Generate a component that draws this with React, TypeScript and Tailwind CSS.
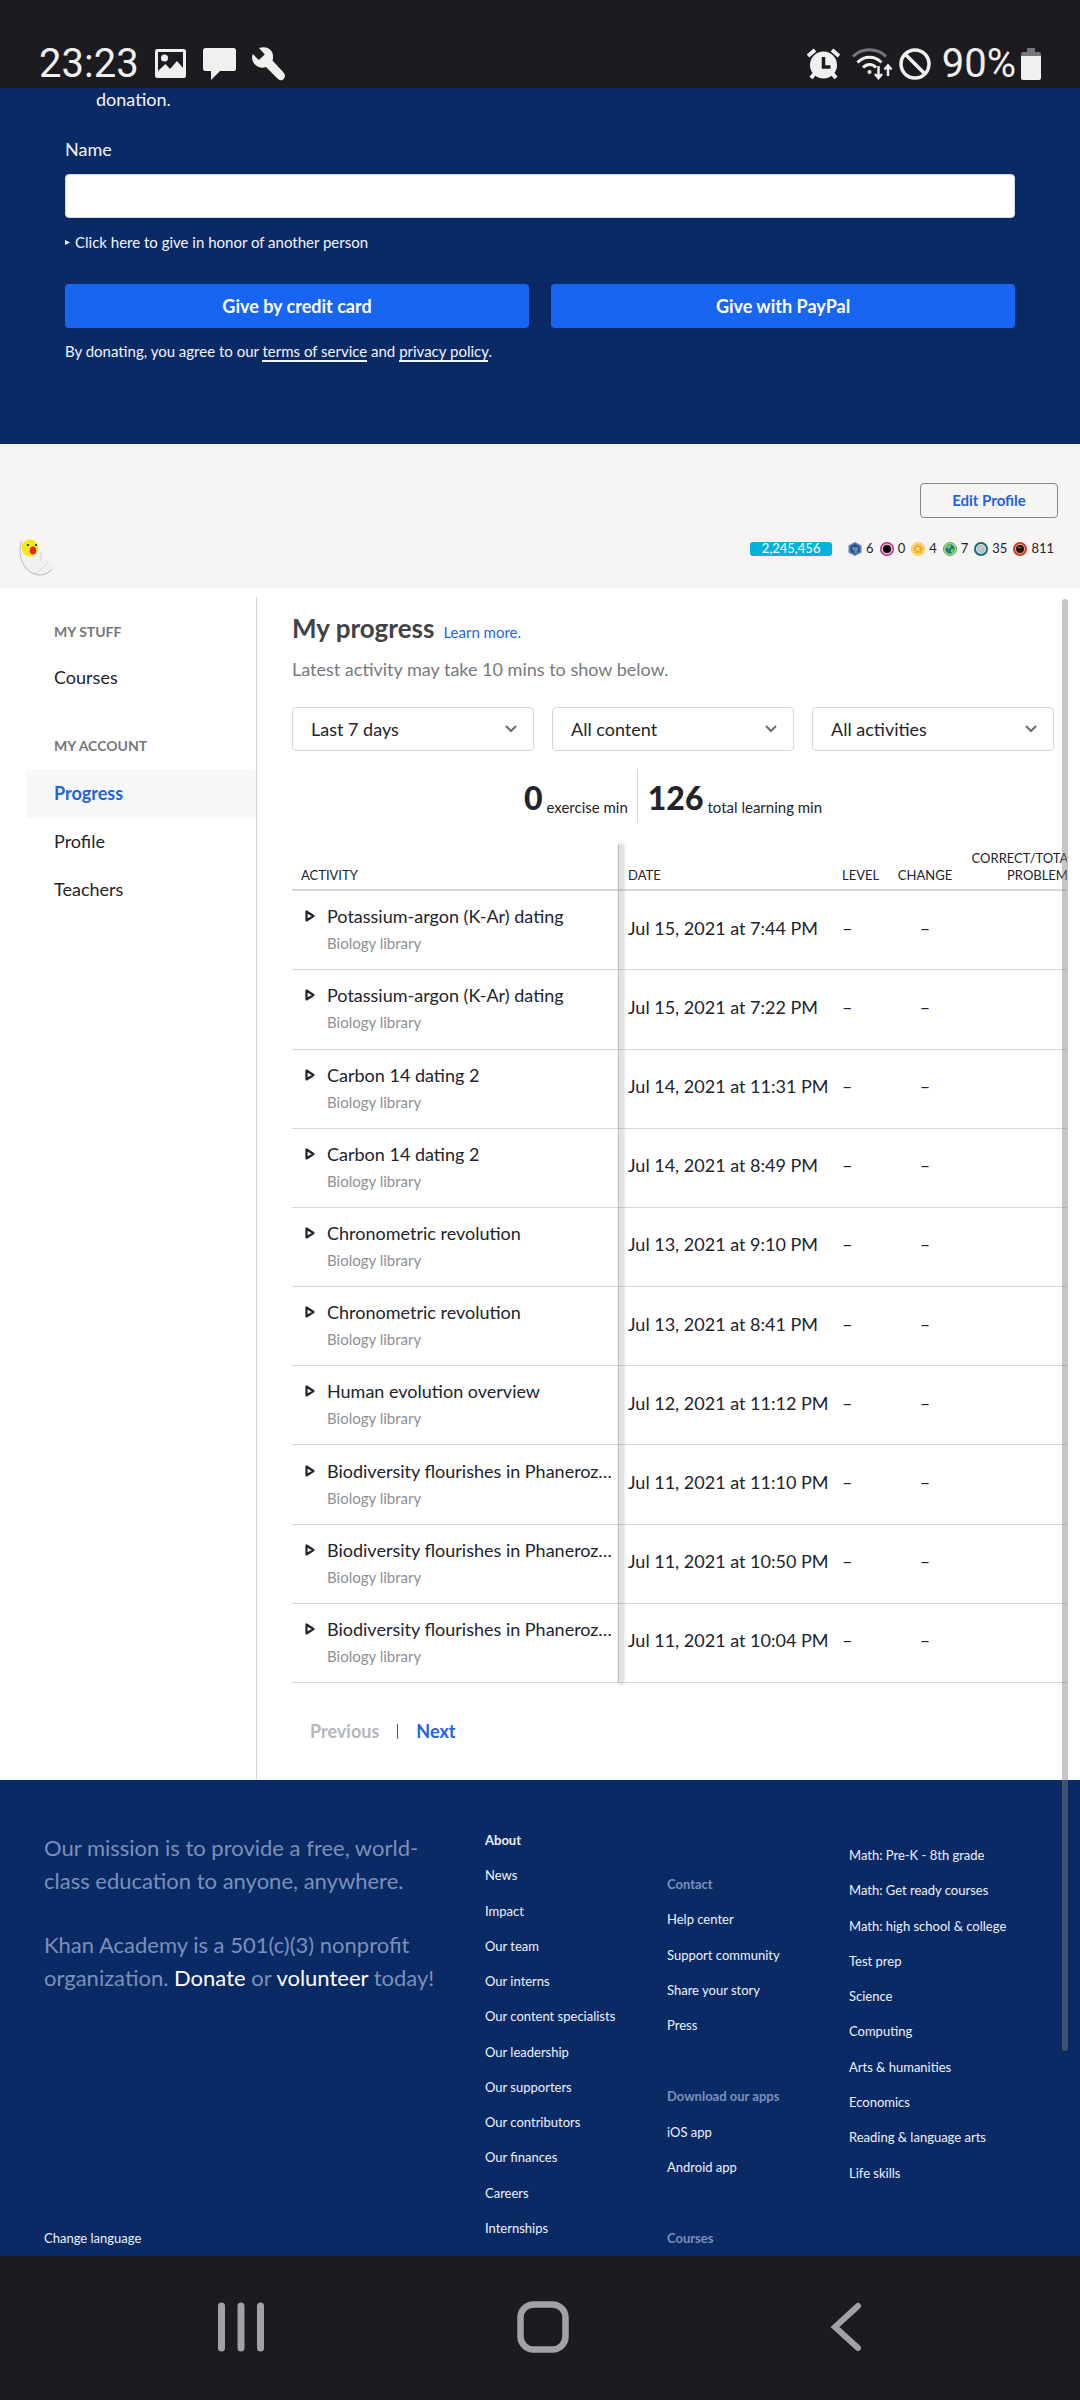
import type { ReactNode } from 'react';

const activities = [
  ['Potassium-argon (K-Ar) dating', 'Jul 15, 2021 at 7:44 PM'],
  ['Potassium-argon (K-Ar) dating', 'Jul 15, 2021 at 7:22 PM'],
  ['Carbon 14 dating 2', 'Jul 14, 2021 at 11:31 PM'],
  ['Carbon 14 dating 2', 'Jul 14, 2021 at 8:49 PM'],
  ['Chronometric revolution', 'Jul 13, 2021 at 9:10 PM'],
  ['Chronometric revolution', 'Jul 13, 2021 at 8:41 PM'],
  ['Human evolution overview', 'Jul 12, 2021 at 11:12 PM'],
  ['Biodiversity flourishes in Phanerozoic eon', 'Jul 11, 2021 at 11:10 PM'],
  ['Biodiversity flourishes in Phanerozoic eon', 'Jul 11, 2021 at 10:50 PM'],
  ['Biodiversity flourishes in Phanerozoic eon', 'Jul 11, 2021 at 10:04 PM'],
];

const aboutLinks = [
  'News', 'Impact', 'Our team', 'Our interns', 'Our content specialists', 'Our leadership',
  'Our supporters', 'Our contributors', 'Our finances', 'Careers', 'Internships',
];

const courseLinks = [
  'Math: Pre-K - 8th grade', 'Math: Get ready courses', 'Math: high school & college', 'Test prep',
  'Science', 'Computing', 'Arts & humanities', 'Economics', 'Reading & language arts', 'Life skills',
];

function StatusBar() {
  return (
    <header className="flex h-[88px] items-end justify-between bg-[#1c1b20] px-[39px] pb-1 font-[Roboto,sans-serif] text-[40px] leading-10 text-[#f0f0f0]">
      <div className="flex items-center">
        <span>23:23</span>
        <svg className="ml-4 h-[30px] w-[31px]" viewBox="0 0 31 30" fill="currentColor" aria-hidden="true">
          <path fillRule="evenodd" d="M2.500 0h26A2.500 2.500 0 0 1 31 2.500v24A2.500 2.500 0 0 1 28.500 29h-26A2.500 2.500 0 0 1 0 26.500v-24A2.500 2.500 0 0 1 2.500 0ZM3 3v19l7.500-7 4.500 5 7-8 6 7V3Z" />
          <circle cx="9.500" cy="9" r="3.500" />
        </svg>
        <svg className="ml-[17px] h-8 w-[33px]" viewBox="0 0 33 32" fill="currentColor" aria-hidden="true">
          <path d="M2.500 0h28A2.500 2.500 0 0 1 33 2.500v18a2.500 2.500 0 0 1-2.500 2.500H17l-9 9v-9H2.500A2.500 2.500 0 0 1 0 20.500v-18A2.500 2.500 0 0 1 2.500 0Z" />
        </svg>
        <svg className="ml-4 h-[34px] w-[34px]" viewBox="0 0 34 34" fill="currentColor" aria-hidden="true">
          <path d="M7 1c5-2 11-.5 13 4 1.500 3 1.300 6 .5 8.500L32 26c3 4-2 10-6 6L14 20c-4 1.500-8.500.5-11.500-3C0 14-.5 10 .8 7l6 6 6-5.500Z" />
        </svg>
      </div>
      <div className="flex items-center">
        <svg className="h-8 w-[33px]" viewBox="0 0 33 32" aria-hidden="true">
          <g stroke="#f0f0f0" strokeWidth="4">
            <path d="M1 8l7-6M32 8l-7-6M8 25l-4 5M25 25l4 5" />
          </g>
          <circle cx="16.500" cy="17" r="13.500" fill="#f0f0f0" />
          <path d="M16.500 9v10h7" fill="none" stroke="#1c1b20" strokeWidth="3.500" />
        </svg>
        <svg className="ml-3 h-8 w-[41px]" viewBox="0 0 41 32" fill="none" stroke="#f0f0f0" strokeWidth="3" aria-hidden="true">
          <path d="M1 8.500C10-.5 25-.5 34 8.500" stroke="#77767a" />
          <path d="M5.500 14.500c6.500-7 17.500-7 24 0M11 19.500c4-4 9.500-4 13 0" />
          <circle cx="17.500" cy="24" r="2" fill="#f0f0f0" stroke="none" />
          <path d="M26.500 18v11M23 26l3.500 4 3.500-4M36 28V18M32.500 21.500l3.500-4 3.500 4" strokeWidth="2.500" />
        </svg>
        <svg className="ml-[6px] h-8 w-8" viewBox="0 0 32 32" fill="none" stroke="#f0f0f0" strokeWidth="3.500" aria-hidden="true">
          <circle cx="16" cy="16" r="14" />
          <path d="M6 6l20 20" />
        </svg>
        <span className="ml-[11px]">90%</span>
        <svg className="ml-[5px] h-8 w-5" viewBox="0 0 20 32" aria-hidden="true">
          <path d="M6 0h8v4h4a2 2 0 0 1 2 2v2H0V6a2 2 0 0 1 2-2h4Z" fill="#77767a" />
          <path d="M0 8h20v22a2 2 0 0 1-2 2H2a2 2 0 0 1-2-2Z" fill="#f0f0f0" />
        </svg>
      </div>
    </header>
  );
}

function Donation() {
  return (
    <section className="bg-[#0a2a66] px-[65px] pb-[81px] text-[18px] leading-6 text-[#f2f5fb]">
      <p className="pl-[31px] leading-[22px]">donation.</p>
      <label htmlFor="name" className="mt-[27px] block">Name</label>
      <input id="name" type="text" className="mt-[13px] block h-11 w-full rounded-[4px] border border-[#d6dae6] bg-white px-3 text-[#21242c]" />
      <button type="button" className="mt-3 flex items-center gap-[5px] text-[15px]">
        <svg className="h-2 w-[5px]" viewBox="0 0 5 8" fill="currentColor" aria-hidden="true"><path d="M0 2l5 2.500L0 7Z" /></svg>
        Click here to give in honor of another person
      </button>
      <div className="mt-[30px] grid grid-cols-2 gap-[22px] font-bold text-white">
        <button type="button" className="h-11 rounded-[4px] bg-[#1865f2]">Give by credit card</button>
        <button type="button" className="h-11 rounded-[4px] bg-[#1865f2]">Give with PayPal</button>
      </div>
      <p className="mt-[11px] text-[15px]">
        By donating, you agree to our <a href="#terms" className="border-b-2 border-current">terms of service</a> and{' '}
        <a href="#privacy" className="border-b-2 border-current">privacy policy</a>.
      </p>
    </section>
  );
}

function Badge({ count, children }: { count: string; children: ReactNode }) {
  return (
    <span className="flex items-center gap-1">
      <svg className="h-[14px] w-[14px]" viewBox="0 0 14 14" aria-hidden="true">{children}</svg>
      {count}
    </span>
  );
}

function ProfileBanner() {
  return (
    <section className="flex h-36 items-end justify-between bg-[#f6f5f4] pr-[22px] pl-[19px]">
      <svg className="mb-[11px] h-[38px] w-[34px]" viewBox="0 0 34 38" aria-hidden="true">
        <path d="M2 5C-1 13 2 34 20 36c7 0 13-3 14-9L20 13Z" fill="#f1f1f1" />
        <path d="M3 2C-2 12 2 34 20 36c5 0 10-2 13-6" fill="none" stroke="#b5b5b5" />
        <path d="M22 13q0 5-1 9M16 35q7-4 13-12" fill="none" stroke="#d8d8d8" />
        <circle cx="11" cy="9" r="8.500" fill="#f5e71b" />
        <ellipse cx="14" cy="11.500" rx="3.200" ry="4" fill="#e7261c" />
        <circle cx="9" cy="6" r="1.100" fill="#222" />
        <circle cx="17" cy="6" r="1.100" fill="#222" />
      </svg>
      <div className="flex flex-col items-end">
        <button type="button" className="h-[35px] w-[138px] rounded-[4px] border border-[#85878c] text-[15px] font-bold text-[#1f63de]">Edit Profile</button>
        <div className="mt-[14px] mb-[22px] flex h-[34px] items-center pr-1 text-[13px] text-[#21242c]">
          <span className="mr-4 flex h-[14px] w-[82px] items-center justify-center rounded-[3px] bg-[#05b2dd] text-white">2,245,456</span>
          <div className="flex gap-[6px]">
            <Badge count="6">
              <path d="M7 0l6.500 3.500v7L7 14 .5 10.500v-7Z" fill="#5580bd" />
              <path d="M7 2l4.500 2.500v5L7 12 2.500 9.500v-5Z" fill="#244a80" />
              <path d="M4 6h6M5 8h5M6 10h3" stroke="#a9c0df" />
            </Badge>
            <Badge count="0">
              <circle cx="7" cy="7" r="6.300" fill="#f0b6dd" stroke="#b22a8b" strokeWidth="1.400" />
              <circle cx="7" cy="7" r="4" fill="#000" />
            </Badge>
            <Badge count="4">
              <circle cx="7" cy="7" r="6.500" fill="#ffe38a" stroke="#fbc736" />
              <circle cx="7" cy="7" r="4" fill="none" stroke="#e89b12" strokeWidth="2" strokeDasharray="1.500 1" />
              <circle cx="7" cy="7" r="2.500" fill="#fde08a" stroke="#e89b12" />
            </Badge>
            <Badge count="7">
              <circle cx="7" cy="7" r="6.500" fill="#a5dc9b" stroke="#4caf50" />
              <circle cx="7" cy="7" r="4.700" fill="#207a75" />
              <path d="M3 5l4-3 1 3-3 2ZM8 7l3 0-1 4-2-1Z" fill="#7bc85b" />
            </Badge>
            <Badge count="35">
              <circle cx="7" cy="7" r="6" fill="#d2f0ee" stroke="#166b74" strokeWidth="2" />
              <circle cx="7" cy="7" r="4" fill="#b9bec0" />
              <path d="M4 9l5-5" stroke="#e4e6e7" />
            </Badge>
            <Badge count="811">
              <circle cx="7" cy="7" r="6" fill="#f2a58e" stroke="#cd4425" strokeWidth="2" />
              <circle cx="7" cy="7" r="4" fill="#201614" />
              <path d="M5 5l3 1" stroke="#a8867c" />
            </Badge>
          </div>
        </div>
      </div>
    </section>
  );
}

function Sidebar() {
  return (
    <nav className="mt-[9px] w-[257px] shrink-0 border-r border-[#d6d8da] pt-[25px] pl-[26px] text-[18px] text-[#21242c]">
      <h2 className="pl-[28px] text-[14px] leading-5 font-bold text-[#74767a]">MY STUFF</h2>
      <a href="#courses" className="mt-[11px] flex h-[49px] items-center pl-[28px]">Courses</a>
      <h2 className="mt-[34px] pl-[28px] text-[14px] leading-5 font-bold text-[#74767a]">MY ACCOUNT</h2>
      <a href="#progress" className="mt-[13px] flex h-[49px] items-center rounded-[4px] bg-[#f7f8fa] pl-[28px] font-bold text-[#1f63de]">Progress</a>
      <a href="#profile" className="flex h-[47px] items-center pl-[28px]">Profile</a>
      <a href="#teachers" className="flex h-[49px] items-center pl-[28px]">Teachers</a>
    </nav>
  );
}

function Filter({ label, value }: { label: string; value: string }) {
  return (
    <div className="relative">
      <select aria-label={label} className="h-11 w-full appearance-none rounded-[4px] border border-[#d6d8da] bg-white pl-[18px] text-[18px] text-[#21242c]">
        <option>{value}</option>
      </select>
      <svg className="pointer-events-none absolute top-[18px] right-[17px] h-2 w-3" viewBox="0 0 12 8" fill="none" stroke="#6a6c71" strokeWidth="2" strokeLinecap="round" aria-hidden="true">
        <path d="M1.500 1.500L6 6l4.500-4.500" />
      </svg>
    </div>
  );
}

function ActivityTable() {
  return (
    <div className="relative mt-[22px] mr-[13px] overflow-x-clip">
      <table className="h-[839px] w-[calc(100%+20px)] table-fixed text-left text-[18px] text-[#21242c]">
        <thead className="text-[13px] leading-[17px]">
          <tr className="h-[46px] border-b-2 border-[#d6d8da] align-bottom">
            <th className="w-[326px] pb-[5px] pl-[9px] font-normal">ACTIVITY</th>
            <th className="w-[214px] pb-[5px] pl-[10px] font-normal">DATE</th>
            <th className="w-[65px] pb-[5px] pl-[10px] font-normal">LEVEL</th>
            <th className="w-[56px] pb-[5px] text-center font-normal">CHANGE</th>
            <th className="pr-3 pb-[5px] text-right font-normal">CORRECT/TOTAL<br />PROBLEMS</th>
          </tr>
        </thead>
        <tbody>
          {activities.map(([title, date], i) => (
            <tr key={i} className="border-b border-[#d6d8da]">
              <td className="pl-[13px]">
                <div className="flex gap-3">
                  <svg className="mt-[7px] h-3 w-[10px] shrink-0" viewBox="0 0 10 12" fill="none" stroke="#21242c" strokeWidth="2.200" strokeLinejoin="round" aria-hidden="true">
                    <path d="M1.500 1.500v9L8.500 6Z" />
                  </svg>
                  <div className="min-w-0 pr-[2px]">
                    <a href="#activity" className="block truncate leading-[26px]">{title}</a>
                    <div className="text-[15px] leading-7 text-[#8e9094]">Biology library</div>
                  </div>
                </div>
              </td>
              <td className="pb-1 pl-[10px] whitespace-nowrap">{date}</td>
              <td className="pb-1 pl-[10px]">–</td>
              <td className="pb-1 text-center">–</td>
              <td />
            </tr>
          ))}
        </tbody>
      </table>
      <div className="absolute inset-y-0 left-[326px] w-px bg-[#b8b9bc] shadow-[3px_0_4px_1px_rgba(0,0,0,0.25)]" />
    </div>
  );
}

function Progress() {
  return (
    <main className="min-w-0 flex-1 pl-[35px] text-[#21242c]">
      <div className="flex items-baseline gap-[9px] pt-6 leading-8">
        <h1 className="text-[26px] font-bold text-[#424345]">My progress</h1>
        <a href="#learn" className="text-[15px] text-[#1f63de]">Learn more.</a>
      </div>
      <p className="mt-[9px] text-[18px] leading-6 text-[#77797d]">Latest activity may take 10 mins to show below.</p>
      <div className="mt-[26px] mr-[26px] grid grid-cols-3 gap-[18px]">
        <Filter label="Date range" value="Last 7 days" />
        <Filter label="Content" value="All content" />
        <Filter label="Activity type" value="All activities" />
      </div>
      <div className="mt-[18px] mr-[26px] flex h-[53px] justify-center text-[15px]">
        <p className="flex items-center gap-1 border-r border-[#d6d8da] pr-[9px]">
          <strong className="pt-1 text-[32px] font-black">0</strong>
          <span className="pt-[22px] leading-6">exercise min</span>
        </p>
        <p className="flex items-center gap-1 pl-[10px]">
          <strong className="pt-1 text-[32px] font-black">126</strong>
          <span className="pt-[22px] leading-6">total learning min</span>
        </p>
      </div>
      <ActivityTable />
      <div className="flex items-center pt-9 pb-[37px] pl-[18px] text-[18px] leading-6 font-bold">
        <button type="button" disabled className="text-[#b5b7ba]">Previous</button>
        <span className="mx-[18px] h-[15px] w-px bg-[#50535a]" />
        <button type="button" className="text-[#1f63de]">Next</button>
      </div>
    </main>
  );
}

function Footer() {
  return (
    <footer className="grid flex-1 grid-cols-[441fr_182fr_182fr_231fr] bg-[#0a2a66] pl-11 text-[13px] leading-[35px] text-[#eef2fa]">
      <div className="flex flex-col justify-between pt-[51px]">
        <div className="pr-10 text-[22px] leading-[33px] text-[#7b90b9]">
          <p>Our mission is to provide a free, world-class education to anyone, anywhere.</p>
          <p className="mt-[31px]">
            Khan Academy is a 501(c)(3) nonprofit organization. <a href="#donate" className="text-white">Donate</a> or{' '}
            <a href="#volunteer" className="text-white">volunteer</a> today!
          </p>
        </div>
        <a href="#language">Change language</a>
      </div>
      <ul className="grid auto-rows-fr pt-[43px] pb-[10px]">
        <li className="font-bold">About</li>
        {aboutLinks.map((t) => <li key={t}><a href="#about">{t}</a></li>)}
      </ul>
      <ul className="grid auto-rows-fr pt-[87px]">
        <li className="font-bold text-[#7b90b9]">Contact</li>
        <li><a href="#help">Help center</a></li>
        <li><a href="#community">Support community</a></li>
        <li><a href="#story">Share your story</a></li>
        <li><a href="#press">Press</a></li>
        <li className="row-start-7 font-bold text-[#7b90b9]">Download our apps</li>
        <li className="row-start-8"><a href="#ios">iOS app</a></li>
        <li className="row-start-9"><a href="#android">Android app</a></li>
        <li className="row-start-11 font-bold text-[#7b90b9]">Courses</li>
      </ul>
      <ul className="grid auto-rows-fr pt-[58px] pb-[65px]">
        {courseLinks.map((t) => <li key={t}><a href="#course">{t}</a></li>)}
      </ul>
    </footer>
  );
}

function SystemNav() {
  return (
    <nav className="flex h-36 items-center justify-between bg-[#1c1b20] pr-[209px] pb-[3px] pl-[215px]">
      <button type="button" aria-label="Recent apps">
        <svg className="h-[52px] w-[52px]" viewBox="0 0 52 52" fill="none" stroke="#a2a1a4" strokeWidth="7" strokeLinecap="round"><path d="M6.500 5v42M26 5v42M45.500 5v42" /></svg>
      </button>
      <button type="button" aria-label="Home">
        <svg className="h-[52px] w-[52px]" viewBox="0 0 52 52" fill="none" stroke="#a2a1a4" strokeWidth="6.500"><rect x="3.500" y="3.500" width="45" height="45" rx="13" /></svg>
      </button>
      <button type="button" aria-label="Back">
        <svg className="h-[52px] w-[52px]" viewBox="0 0 52 52" fill="none" stroke="#a2a1a4" strokeWidth="6" strokeLinecap="round"><path d="M39 5L16 26l23 21" /></svg>
      </button>
    </nav>
  );
}

export default function App() {
  return (
    <div className="flex min-h-screen flex-col bg-white font-[Lato,sans-serif]">
      <StatusBar />
      <Donation />
      <ProfileBanner />
      <div className="relative flex flex-1 flex-col">
        <div className="flex">
          <Sidebar />
          <Progress />
        </div>
        <Footer />
        <div className="pointer-events-none absolute top-[11px] right-3 bottom-[205px] w-[6px] rounded-full bg-[#808080]/45" />
      </div>
      <SystemNav />
    </div>
  );
}
